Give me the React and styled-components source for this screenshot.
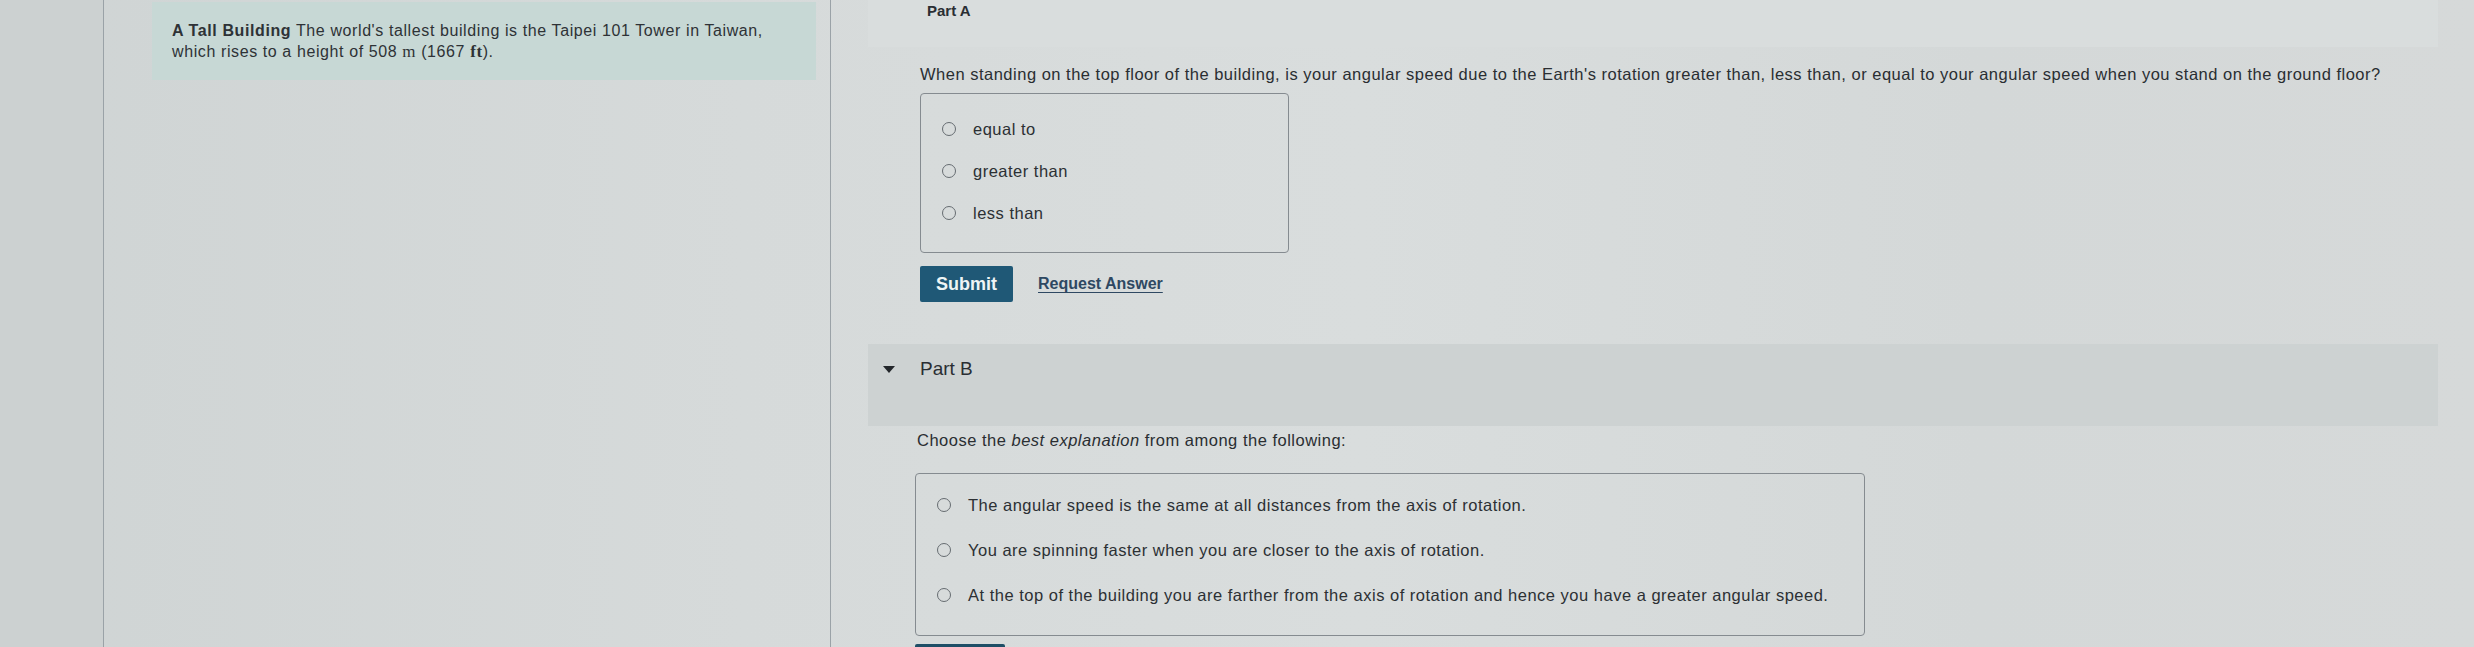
import React from "react";
import styled, { createGlobalStyle } from "styled-components";

const Global = createGlobalStyle`
  html, body { margin: 0; padding: 0; }
  body {
    background: #d3d8d8;
    font-family: "Liberation Sans", Arial, sans-serif;
    color: #2c3034;
    overflow: hidden;
  }
`;

const Page = styled.div`
  display: flex;
  width: 2474px;
  height: 647px;
  overflow: hidden;
  background: linear-gradient(90deg, #cfd4d4 0%, #d6dada 30%, #d9dddd 55%, #d4d8d8 80%, #d6d9d9 100%);
`;

const Gutter = styled.div`
  width: 103px;
  flex: none;
  background: #ccd1d1;
`;

const LeftPanel = styled.aside`
  width: 728px;
  flex: none;
  box-sizing: border-box;
  border-left: 1px solid #9aa2a7;
  border-right: 1px solid #9aa2a7;
  padding: 2px 0 0 48px;
`;

const Intro = styled.div`
  width: 664px;
  height: 78px;
  box-sizing: border-box;
  padding: 18px 20px 0;
  background: #c7d8d5;
  font-size: 16px;
  letter-spacing: 0.6px;
  line-height: 21px;
  color: #2e3236;
`;

const Strong = styled.b`
  font-weight: 700;
`;

const Unit = styled.span`
  font-family: "Liberation Serif", "Times New Roman", serif;
  font-size: 17px;
  font-weight: ${(p) => (p.$bold ? 700 : 400)};
`;

const Main = styled.main`
  margin-left: 37px;
  width: 1570px;
  flex: none;
  display: flex;
  flex-direction: column;
  & > * { flex-shrink: 0; }
`;

const PartHeader = styled.div`
  height: ${(p) => p.$h}px;
  margin-top: ${(p) => p.$mt || 0}px;
  background: ${(p) => p.$bg};
  display: flex;
  align-items: flex-start;
  gap: 25px;
  padding: ${(p) => p.$pad};
  box-sizing: border-box;
  font-size: 19px;
  color: #2a2e33;
`;

const Caret = styled.span`
  width: 0;
  height: 0;
  margin-top: 8px;
  border-left: 6.5px solid transparent;
  border-right: 6.5px solid transparent;
  border-top: 7px solid #23272b;
`;

const PartTitle = styled.span`
  font-weight: ${(p) => (p.$bold ? 700 : 400)};
  line-height: 22px;
  font-size: ${(p) => p.$size || 19}px;
`;

const Content = styled.div`
  padding-left: 52px;
  display: flex;
  flex-direction: column;
  align-items: flex-start;
`;

const Prompt = styled.p`
  margin: ${(p) => p.$m};
  font-size: 16.5px;
  letter-spacing: 0.5px;
  line-height: 22px;
  color: #2a2e32;
  white-space: nowrap;
`;

const Choices = styled.div`
  width: ${(p) => p.$w}px;
  height: ${(p) => p.$h}px;
  margin: ${(p) => p.$m};
  box-sizing: border-box;
  border: 1px solid #858b90;
  border-radius: 4px;
  display: flex;
  flex-direction: column;
  gap: ${(p) => p.$gap}px;
  padding: ${(p) => p.$pt}px 0 0 21px;
`;

const Choice = styled.label`
  display: flex;
  align-items: center;
  gap: 17px;
  height: 26px;
  font-size: 16.5px;
  letter-spacing: 0.5px;
  color: #2c3034;
  white-space: nowrap;
`;

const Radio = styled.span`
  width: 12px;
  height: 12px;
  border-radius: 50%;
  border: 1.5px solid #666c71;
  flex: none;
`;

const Actions = styled.div`
  display: flex;
  align-items: center;
  gap: 25px;
  margin-top: 13px;
`;

const Button = styled.button`
  width: 93px;
  height: 36px;
  border: none;
  border-radius: 2px;
  background: #1f5876;
  color: #eef4f5;
  font-family: "Liberation Sans", Arial, sans-serif;
  font-weight: 700;
  font-size: 18px;
  padding: 0;
`;

const LinkText = styled.a`
  font-size: 16px;
  font-weight: 700;
  color: #2e4862;
  text-decoration: underline;
  text-underline-offset: 3px;
`;

const BottomButton = styled.div`
  width: 90px;
  height: 20px;
  margin: 8px 0 0 -5px;
  background: #1e4e66;
  border-radius: 2px;
`;

export default function App() {
  return (
    <>
      <Global />
      <Page>
        <Gutter />
        <LeftPanel>
          <Intro>
            <Strong>A Tall Building</Strong> The world's tallest building is the Taipei 101 Tower in Taiwan,
            <br />
            which rises to a height of 508 <Unit>m</Unit> (1667 <Unit $bold>ft</Unit>).
          </Intro>
        </LeftPanel>
        <Main>
          <PartHeader $h={47} $bg="#d9dddd" $pad="0 0 0 59px">
            <PartTitle $bold $size={15}>Part A</PartTitle>
          </PartHeader>
          <Content>
            <Prompt $m="16px 0 0 0">
              When standing on the top floor of the building, is your angular speed due to the Earth's rotation greater than, less than, or equal to your angular speed when you stand on the ground floor?
            </Prompt>
            <Choices $w={369} $h={160} $m="8px 0 0 0" $gap={16} $pt={22}>
              <Choice><Radio />equal to</Choice>
              <Choice><Radio />greater than</Choice>
              <Choice><Radio />less than</Choice>
            </Choices>
            <Actions>
              <Button>Submit</Button>
              <LinkText>Request Answer</LinkText>
            </Actions>
          </Content>
          <PartHeader $h={82} $mt={42} $bg="#cdd2d2" $pad="14px 0 0 15px">
            <Caret />
            <PartTitle>Part B</PartTitle>
          </PartHeader>
          <Content>
            <Prompt $m="3px 0 0 -3px">
              Choose the <i>best explanation</i> from among the following:
            </Prompt>
            <Choices $w={950} $h={163} $m="22px 0 0 -5px" $gap={19} $pt={18}>
              <Choice><Radio />The angular speed is the same at all distances from the axis of rotation.</Choice>
              <Choice><Radio />You are spinning faster when you are closer to the axis of rotation.</Choice>
              <Choice><Radio />At the top of the building you are farther from the axis of rotation and hence you have a greater angular speed.</Choice>
            </Choices>
            <BottomButton />
          </Content>
        </Main>
      </Page>
    </>
  );
}
